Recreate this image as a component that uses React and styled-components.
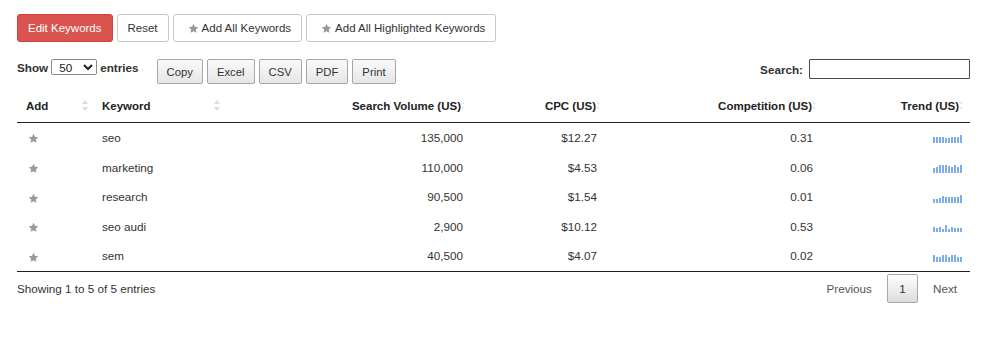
import React from 'react';
import styled, { createGlobalStyle } from 'styled-components';

const GlobalStyle = createGlobalStyle`
  body {
    margin: 0;
    font-family: "Liberation Sans", Arial, sans-serif;
    font-size: 11.7px;
    color: #333;
    background: #fff;
  }
`;

const Page = styled.div`
  padding: 14px 30px 0 17px;
  width: 953px;
`;

const TopBar = styled.div`
  display: flex;
  gap: 4px;
  height: 28px;
`;

const ActionButton = styled.button`
  display: flex;
  align-items: center;
  gap: 3px;
  height: 28px;
  padding: ${p => (p.$icon ? '0 10px 0 14px' : '0 10px')};
  font-family: inherit;
  font-size: 11.5px;
  border-radius: 3px;
  border: 1px solid ${p => (p.$primary ? '#d43f3a' : '#c8c8c8')};
  background: ${p => (p.$primary ? '#d9534f' : '#fff')};
  color: ${p => (p.$primary ? '#fff' : '#333')};
  cursor: pointer;
`;

const ToolRow = styled.div`
  display: flex;
  align-items: flex-start;
  margin-top: 17px;
  height: 25px;
`;

const LengthLabel = styled.label`
  display: flex;
  align-items: center;
  gap: 3px;
  font-weight: bold;
  color: #333;
  height: 16px;
`;

const LengthSelect = styled.select`
  width: 46px;
  height: 16px;
  padding: 0 0 0 3px;
  font-family: inherit;
  font-size: 11.7px;
  border: 1px solid #8a8a8a;
  border-radius: 2px;
  background: #fff;
  color: #222;
`;

const ExportGroup = styled.div`
  display: flex;
  gap: 4px;
  margin-left: 18px;
`;

const ExportButton = styled.button`
  height: 25px;
  padding: 0 9px;
  font-family: inherit;
  font-size: 11.3px;
  color: #333;
  border: 1px solid #a6a6a6;
  border-radius: 2px;
  background: linear-gradient(to bottom, #fafafa 0%, #e6e6e6 100%);
  cursor: pointer;
`;

const SearchLabel = styled.label`
  display: flex;
  align-items: center;
  gap: 6px;
  margin-left: auto;
  font-weight: bold;
  color: #333;
`;

const SearchInput = styled.input`
  box-sizing: content-box;
  width: 157px;
  height: 16px;
  padding: 1px;
  margin: 0;
  border: 1px solid #4a4a4a;
  border-radius: 1px;
  font-family: inherit;
  font-size: 11.7px;
`;

const Table = styled.table`
  width: 953px;
  margin-top: 5px;
  border-collapse: collapse;
  table-layout: fixed;
  border-bottom: 1px solid #222;
`;

const Th = styled.th`
  height: 33px;
  padding: 0 ${p => (p.$right ? '6px' : '5px')} 0 9px;
  font-size: 11.5px;
  font-weight: bold;
  color: #222;
  text-align: ${p => (p.$right ? 'right' : 'left')};
  border-bottom: 1px solid #222;
  white-space: nowrap;
`;

const HeadInner = styled.div`
  display: flex;
  align-items: center;
  justify-content: ${p => (p.$right ? 'flex-end' : 'space-between')};
`;

const Td = styled.td`
  padding: 8px ${p => p.$pr || '10px'} 8px ${p => p.$pl || '9px'};
  line-height: 13.6px;
  text-align: ${p => (p.$right ? 'right' : 'left')};
  color: #333;

  svg {
    vertical-align: middle;
  }
`;

const Spark = styled.span`
  display: inline-flex;
  align-items: flex-end;
  gap: 1px;
  height: 9px;
  vertical-align: middle;
`;

const Bar = styled.span`
  flex: 0 0 2px;
  width: 2px;
  background: #7fadec;
`;

const Footer = styled.div`
  display: flex;
  align-items: center;
  margin-top: 2px;
  height: 29px;
`;

const Info = styled.div`
  color: #333;
`;

const Pager = styled.div`
  display: flex;
  align-items: center;
  margin-left: auto;
  margin-right: -2px;
`;

const PageLink = styled.span`
  padding: 0 15px;
  color: #555;
  font-size: 11.7px;
`;

const PageCurrent = styled.span`
  display: flex;
  align-items: center;
  justify-content: center;
  width: 29px;
  height: 27px;
  border: 1px solid #a8a8a8;
  border-radius: 2px;
  background: linear-gradient(to bottom, #fff 0%, #dcdcdc 100%);
  color: #333;
  font-size: 11.7px;
`;

const Star = ({ size = 11, color = '#999' }) => (
  <svg width={size} height={size} viewBox="0 0 24 24">
    <path
      d="M12 1.8l3.1 6.6 7.2.9-5.3 5 1.4 7.1L12 17.9l-6.4 3.5 1.4-7.1-5.3-5 7.2-.9z"
      fill={color}
    />
  </svg>
);

const BothSort = () => (
  <svg width="6" height="11" viewBox="0 0 6 11">
    <path d="M3 0L6 4H0z M3 11L0 7h6z" fill="#ddd" />
  </svg>
);

const HalfSort = () => (
  <svg width="4" height="11" viewBox="0 0 4 11" style={{ marginLeft: 1 }}>
    <path d="M0 1L3 4H0z M0 10L3 7H0z" fill="#e6e6e6" />
  </svg>
);

const rows = [
  { kw: 'seo', vol: '135,000', cpc: '$12.27', comp: '0.31', trend: [6, 6, 6, 6, 5, 5, 6, 6, 6, 8] },
  { kw: 'marketing', vol: '110,000', cpc: '$4.53', comp: '0.06', trend: [5, 6, 8, 8, 8, 7, 6, 8, 6, 8] },
  { kw: 'research', vol: '90,500', cpc: '$1.54', comp: '0.01', trend: [4, 4, 5, 7, 6, 6, 6, 6, 6, 8] },
  { kw: 'seo audi', vol: '2,900', cpc: '$10.12', comp: '0.53', trend: [5, 4, 5, 3, 7, 3, 5, 4, 4, 4] },
  { kw: 'sem', vol: '40,500', cpc: '$4.07', comp: '0.02', trend: [7, 5, 5, 7, 7, 5, 7, 7, 5, 5] },
];

const App = () => {
  return (
    <Page>
      <GlobalStyle />
      <TopBar>
        <ActionButton $primary>Edit Keywords</ActionButton>
        <ActionButton>Reset</ActionButton>
        <ActionButton $icon><Star size={11} color="#9a9a9a" />Add All Keywords</ActionButton>
        <ActionButton $icon><Star size={11} color="#9a9a9a" />Add All Highlighted Keywords</ActionButton>
      </TopBar>
      <ToolRow>
        <LengthLabel>
          Show
          <LengthSelect defaultValue="50">
            <option value="10">10</option>
            <option value="25">25</option>
            <option value="50">50</option>
            <option value="100">100</option>
          </LengthSelect>
          entries
        </LengthLabel>
        <ExportGroup>
          <ExportButton>Copy</ExportButton>
          <ExportButton>Excel</ExportButton>
          <ExportButton>CSV</ExportButton>
          <ExportButton>PDF</ExportButton>
          <ExportButton>Print</ExportButton>
        </ExportGroup>
        <SearchLabel>
          Search:
          <SearchInput type="text" />
        </SearchLabel>
      </ToolRow>
      <Table>
        <colgroup>
          <col style={{ width: 76 }} />
          <col style={{ width: 132 }} />
          <col style={{ width: 247 }} />
          <col style={{ width: 135 }} />
          <col style={{ width: 216 }} />
          <col style={{ width: 147 }} />
        </colgroup>
        <thead>
          <tr>
            <Th><HeadInner>Add<BothSort /></HeadInner></Th>
            <Th><HeadInner>Keyword<BothSort /></HeadInner></Th>
            <Th $right><HeadInner $right>Search Volume (US)<HalfSort /></HeadInner></Th>
            <Th $right><HeadInner $right>CPC (US)<HalfSort /></HeadInner></Th>
            <Th $right><HeadInner $right>Competition (US)<HalfSort /></HeadInner></Th>
            <Th $right><HeadInner $right>Trend (US)<HalfSort /></HeadInner></Th>
          </tr>
        </thead>
        <tbody>
          {rows.map(r => (
            <tr key={r.kw}>
              <Td $pl="11px"><Star /></Td>
              <Td>{r.kw}</Td>
              <Td $right $pr="9px">{r.vol}</Td>
              <Td $right>{r.cpc}</Td>
              <Td $right>{r.comp}</Td>
              <Td $right $pr="8px">
                <Spark>
                  {r.trend.map((h, i) => (
                    <Bar key={i} style={{ height: h }} />
                  ))}
                </Spark>
              </Td>
            </tr>
          ))}
        </tbody>
      </Table>
      <Footer>
        <Info>Showing 1 to 5 of 5 entries</Info>
        <Pager>
          <PageLink>Previous</PageLink>
          <PageCurrent>1</PageCurrent>
          <PageLink>Next</PageLink>
        </Pager>
      </Footer>
    </Page>
  );
};

export default App;
